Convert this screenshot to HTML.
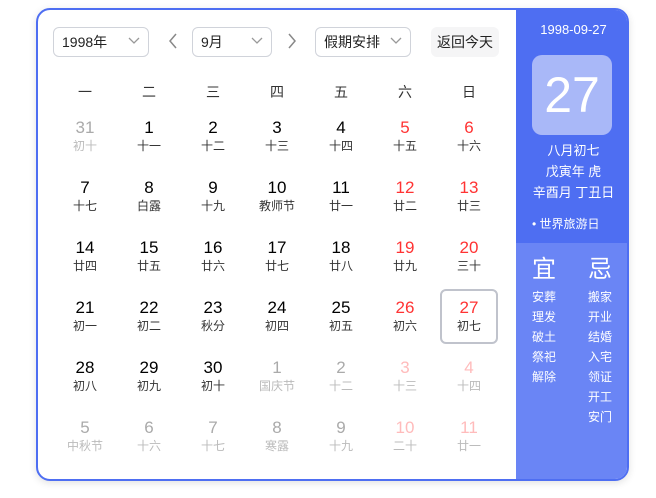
<!DOCTYPE html>
<html><head><meta charset="utf-8"><style>
*{margin:0;padding:0;box-sizing:border-box}
body{width:656px;height:498px;background:#fff;font-family:"Liberation Sans","Noto Sans CJK SC",sans-serif;position:relative;overflow:hidden}
.card{position:absolute;left:36px;top:8px;width:593px;height:473px;border:2px solid #4e6ef2;border-radius:14px;overflow:hidden;box-shadow:0 2px 8px rgba(0,0,0,.12);background:#fff}
.sel{position:absolute;height:30px;top:17px;border:1px solid #d0d3da;border-radius:6px;font-size:14px;color:#222;line-height:28px;padding-left:8px}
.sel svg{position:absolute;right:8px;top:9px}
.arr{position:absolute;top:23px}
.btn{position:absolute;left:393px;top:17px;width:68px;height:30px;background:#f5f5f6;border-radius:6px;font-size:14px;color:#222;line-height:30px;text-align:center}
.wk{position:absolute;top:72px;font-size:14px;color:#333;width:64px;text-align:center}
.c{position:absolute;width:64px;text-align:center}
.n{font-size:17px;line-height:20px;color:#000}
.l{font-size:12px;line-height:16px;color:#333}
.r .n{color:#f33}
.g .n{color:#aaa}.g .l{color:#bbb}
.gr .n{color:#fbb}.gr .l{color:#bbb}
.side{position:absolute;left:478px;top:0;width:115px;height:100%;background:#6a85f5;color:#fff}
.top{position:absolute;left:0;top:0;width:100%;height:233px;background:#4e6ef2}
</style></head><body>
<div class="card">
<div class="sel" style="left:15px;width:96px">1998年<svg width="12" height="8"><path d="M1 1l5 5 5-5" stroke="#999" fill="none" stroke-width="1.3"/></svg></div>
<svg class="arr" style="left:130px" width="10" height="16"><path d="M8 1L2 8l6 7" stroke="#888" fill="none" stroke-width="1.5"/></svg>
<div class="sel" style="left:154px;width:80px">9月<svg width="12" height="8"><path d="M1 1l5 5 5-5" stroke="#999" fill="none" stroke-width="1.3"/></svg></div>
<svg class="arr" style="left:249px" width="10" height="16"><path d="M2 1l6 7-6 7" stroke="#888" fill="none" stroke-width="1.5"/></svg>
<div class="sel" style="left:277px;width:96px">假期安排<svg width="12" height="8"><path d="M1 1l5 5 5-5" stroke="#999" fill="none" stroke-width="1.3"/></svg></div>
<div class="btn">返回今天</div>
<div class="wk" style="left:15px">一</div><div class="wk" style="left:79px">二</div><div class="wk" style="left:143px">三</div><div class="wk" style="left:207px">四</div><div class="wk" style="left:271px">五</div><div class="wk" style="left:335px">六</div><div class="wk" style="left:399px">日</div>
<div style="position:absolute;left:402px;top:279px;width:58px;height:55px;border:2px solid #c0c3cc;border-radius:6px"></div>
<div id="g"></div>
<div class="side"><div class="top"></div>
<div style="position:absolute;top:12px;width:100%;text-align:center;font-size:13px">1998-09-27</div>
<div style="position:absolute;left:16px;top:45px;width:80px;height:80px;background:#a9b8f8;border-radius:10px;text-align:center;font-size:50px;line-height:80px">27</div>
<div style="position:absolute;top:130px;width:100%;text-align:center;font-size:13px;line-height:21px">八月初七<br>戊寅年 虎<br>辛酉月 丁丑日</div>
<div style="position:absolute;left:16px;top:205px;font-size:12px">• 世界旅游日</div>
<div style="position:absolute;left:16px;top:246px;font-size:24px;line-height:28px">宜</div>
<div style="position:absolute;left:72px;top:246px;font-size:24px;line-height:28px">忌</div>
<div style="position:absolute;left:16px;top:277px;font-size:12px;line-height:20px">安葬<br>理发<br>破土<br>祭祀<br>解除</div>
<div style="position:absolute;left:72px;top:277px;font-size:12px;line-height:20px">搬家<br>开业<br>结婚<br>入宅<br>领证<br>开工<br>安门</div>
</div>
</div>
<script>
var d=[["31","初十","g"],["1","十一"],["2","十二"],["3","十三"],["4","十四"],["5","十五","r"],["6","十六","r"],
["7","十七"],["8","白露"],["9","十九"],["10","教师节"],["11","廿一"],["12","廿二","r"],["13","廿三","r"],
["14","廿四"],["15","廿五"],["16","廿六"],["17","廿七"],["18","廿八"],["19","廿九","r"],["20","三十","r"],
["21","初一"],["22","初二"],["23","秋分"],["24","初四"],["25","初五"],["26","初六","r"],["27","初七","r"],
["28","初八"],["29","初九"],["30","初十"],["1","国庆节","g"],["2","十二","g"],["3","十三","gr"],["4","十四","gr"],
["5","中秋节","g"],["6","十六","g"],["7","十七","g"],["8","寒露","g"],["9","十九","g"],["10","二十","gr"],["11","廿一","gr"]];
var h="";d.forEach(function(e,i){h+='<div class="c '+(e[2]||"")+'" style="left:'+(15+64*(i%7))+'px;top:'+(108+60*Math.floor(i/7))+'px"><div class="n">'+e[0]+'</div><div class="l">'+e[1]+'</div></div>'});
document.getElementById("g").innerHTML=h;
</script>
</body></html>
